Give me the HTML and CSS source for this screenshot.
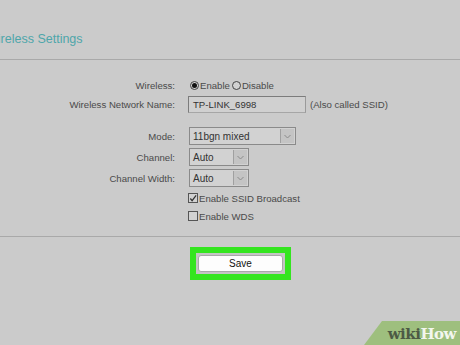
FILE: index.html
```html
<!DOCTYPE html>
<html>
<head>
<meta charset="utf-8">
<link rel="stylesheet" href="styles.css">
</head>
<body>
<div class="page">
  <div class="title">Wireless Settings</div>
  <div class="rule"></div>
  <div class="form">
    <div class="row r-wireless">
      <div class="label">Wireless:</div>
      <div class="ctrl">
        <span class="radio on"></span><span class="opt">Enable</span><span class="radio"></span><span class="opt">Disable</span>
      </div>
    </div>
    <div class="row r-name">
      <div class="label">Wireless Network Name:</div>
      <div class="ctrl">
        <span class="input">TP-LINK_6998</span><span class="note">(Also called SSID)</span>
      </div>
    </div>
    <div class="row r-mode">
      <div class="label">Mode:</div>
      <div class="ctrl">
        <span class="select wide"><span class="val">11bgn mixed</span><span class="arrow"><svg width="7" height="5" viewBox="0 0 7 5"><path d="M0.5 1 L3.5 4 L6.5 1" fill="none" stroke="#8a8a8a" stroke-width="1"/></svg></span></span>
      </div>
    </div>
    <div class="row r-ch">
      <div class="label">Channel:</div>
      <div class="ctrl">
        <span class="select"><span class="val">Auto</span><span class="arrow"><svg width="7" height="5" viewBox="0 0 7 5"><path d="M0.5 1 L3.5 4 L6.5 1" fill="none" stroke="#8a8a8a" stroke-width="1"/></svg></span></span>
      </div>
    </div>
    <div class="row r-cw">
      <div class="label">Channel Width:</div>
      <div class="ctrl">
        <span class="select"><span class="val">Auto</span><span class="arrow"><svg width="7" height="5" viewBox="0 0 7 5"><path d="M0.5 1 L3.5 4 L6.5 1" fill="none" stroke="#8a8a8a" stroke-width="1"/></svg></span></span>
      </div>
    </div>
    <div class="row r-c1">
      <div class="label"></div>
      <div class="ctrl">
        <span class="check"><svg width="9" height="9" viewBox="0 0 9 9"><path d="M1.5 4.5 L3.5 7 L8 1" fill="none" stroke="#333" stroke-width="1.4"/></svg></span><span class="opt">Enable SSID Broadcast</span>
      </div>
    </div>
    <div class="row r-c2">
      <div class="label"></div>
      <div class="ctrl">
        <span class="check"></span><span class="opt">Enable WDS</span>
      </div>
    </div>
  </div>
  <div class="rule rule2"></div>
  <div class="savewrap">
    <div class="hl"><div class="save">Save</div></div>
  </div>
  <div class="wh"><span class="wiki">wiki</span><span class="how">How</span></div>
</div>
</body>
</html>
```
FILE: styles.css
```css
html, body { margin: 0; padding: 0; }
body {
  background: #cbcbcb;
  width: 460px;
  height: 345px;
  overflow: hidden;
  font-family: "Liberation Sans", Arial, sans-serif;
}
.page { position: relative; width: 460px; height: 345px; }
.title {
  padding-top: 32px;
  margin-left: -14px;
  font-size: 12.5px;
  line-height: 14px;
  color: #4ea6aa;
  height: 27px;
}
.rule { height: 1px; background: #a9a9a9; }
.form { padding-top: 16px; }
.row { display: flex; align-items: center; font-size: 9.6px; color: #4a4a4a; }
.label { width: 175px; text-align: right; }
.ctrl { display: flex; align-items: center; padding-left: 13px; }
.r-wireless { height: 18px; }
.r-wireless .ctrl { padding-left: 15px; }
.r-name { height: 19px; margin-top: 1px; }
.r-mode { height: 18px; margin-top: 13px; }
.r-ch { height: 18px; margin-top: 3px; }
.r-cw { height: 18px; margin-top: 3px; }
.r-c1 { height: 18px; margin-top: 2px; }
.r-c2 { height: 18px; }
.radio {
  width: 9px; height: 9px; border: 1px solid #444; border-radius: 50%;
  box-sizing: border-box; display: inline-flex; align-items: center; justify-content: center;
  background: #d2d2d2;
}
.radio.on::after { content: ""; width: 5px; height: 5px; border-radius: 50%; background: #111; }
.opt { margin-left: 1px; margin-right: 2px; }
.input {
  width: 118px; height: 17px; box-sizing: border-box;
  border: 1px solid #7c7c7c; border-right-color: #9a9a9a; border-bottom-color: #a6a6a6;
  background: #d0d0d0; padding-left: 4px; display: flex; align-items: center;
  color: #333;
}
.note { margin-left: 4px; }
.select {
  height: 18px; box-sizing: border-box; border: 1px solid #8a8a8a;
  background: #d2d2d2; display: flex; align-items: stretch; width: 60px; margin-left: 1px;
}
.select.wide { width: 107px; }
.val { flex: 1; display: flex; align-items: center; padding-left: 3px; color: #333; font-size: 10px; }
.arrow {
  width: 13px; border-left: 1px solid #a0a0a0; background: #c4c4c4;
  display: flex; align-items: center; justify-content: center; margin: 1px;
}
.check {
  width: 10px; height: 10px; border: 1px solid #555; box-sizing: border-box;
  background: #d2d2d2; display: inline-flex; align-items: center; justify-content: center;
}
.rule2 { margin-top: 11px; }
.savewrap { display: flex; padding-left: 190px; padding-top: 10px; }
.hl {
  width: 101px; height: 33px; box-sizing: border-box; border: 6px solid #34e51f;
  background: #c4c4c4; padding: 2px;
}
.save {
  height: 100%; box-sizing: border-box; background: #fdfdfd; border: 1px solid #a8a8a8;
  border-radius: 3px; display: flex; align-items: center; justify-content: center;
  font-size: 10px; color: #111;
}
.wh {
  position: absolute; right: 0; bottom: 0; width: 96px; height: 24px;
  background: #9ebf7e; clip-path: polygon(18px 0, 100% 0, 100% 100%, 0 100%);
  display: flex; align-items: center; justify-content: flex-end; padding-right: 4px; padding-top: 2px; box-sizing: border-box;
  font-family: "DejaVu Serif", "Liberation Serif", serif; font-weight: bold; font-size: 15px;
  letter-spacing: -0.5px;
}
.wiki { color: #4d5a45; }
.how { color: #f3f6ee; }
```
